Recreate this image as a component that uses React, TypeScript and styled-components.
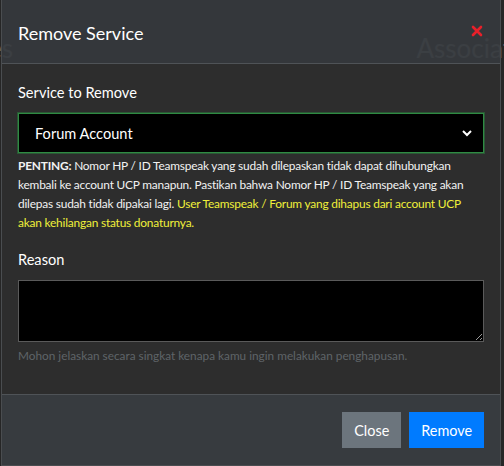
import React from 'react';
import styled, { createGlobalStyle } from 'styled-components';

const GlobalStyle = createGlobalStyle`
  html, body {
    margin: 0;
    padding: 0;
    background: #1c1c1c;
    font-family: Lato, 'Open Sans', sans-serif;
  }
`;

const Page = styled.div`
  position: relative;
  width: 504px;
  height: 466px;
  overflow: hidden;
  background: #262626;
`;

const Backdrop = styled.div`
  display: flex;
  justify-content: space-between;
  padding: 32px 0 0 0;
  color: #6a6d70;
  font-size: 26px;
  line-height: 32px;
`;

const BackText = styled.span<{ $shift: number }>`
  margin-left: ${(p) => Math.min(p.$shift, 0)}px;
  margin-right: ${(p) => Math.min(-p.$shift, 0)}px;
  white-space: nowrap;
`;

const Modal = styled.div`
  position: absolute;
  top: 0;
  left: 1px;
  width: 500px;
  height: 466px;
  display: flex;
  flex-direction: column;
  border: 1px solid #4a4d50;
  border-top: none;
  box-sizing: border-box;
  color: #fff;
`;

const Header = styled.div`
  display: flex;
  justify-content: space-between;
  align-items: center;
  height: 64px;
  padding: 0 17px 0 16px;
  box-sizing: border-box;
  background: rgba(54, 58, 62, 0.9);
  border-bottom: 1px solid #4f5357;
`;

const Title = styled.h5`
  margin: 2px 0 0;
  font-size: 18px;
  font-weight: 400;
`;

const CloseX = styled.button`
  border: none;
  background: none;
  padding: 0;
  margin-top: -2px;
  display: flex;
  cursor: pointer;
`;

const Body = styled.div`
  flex: 1;
  padding: 17px 16px 0;
  background: #2d2d2d;
  border-bottom: 1px solid #4f5357;
`;

const Group = styled.div`
  margin-bottom: 16px;
`;

const Label = styled.label`
  display: block;
  font-size: 14.6px;
  line-height: 24px;
  margin-bottom: 8px;
`;

const SelectWrap = styled.div`
  position: relative;
`;

const Select = styled.select`
  width: 100%;
  height: 40px;
  appearance: none;
  background: #000;
  color: #fff;
  border: 1px solid #2f8a43;
  box-shadow: 0 0 0 1px rgba(40, 167, 69, 0.35);
  border-radius: 0;
  padding: 0 16px;
  font-family: inherit;
  font-size: 14.6px;
  outline: none;
`;

const Chevron = styled.svg`
  position: absolute;
  right: 11px;
  top: 15px;
  pointer-events: none;
`;

const Small = styled.small`
  display: block;
  margin-top: 3px;
  font-size: 11.9px;
  letter-spacing: -0.2px;
  line-height: 19px;
  color: #f2f2f2;
`;

const Warn = styled.span`
  color: #f0f03a;
`;

const TextArea = styled.textarea`
  display: block;
  width: 100%;
  height: 62px;
  box-sizing: border-box;
  background: #000;
  color: #fff;
  border: 1px solid #5a5a5a;
  border-radius: 0;
  outline: none;
  font-family: inherit;
`;

const Hint = styled.small`
  display: block;
  margin-top: 4px;
  font-size: 11.8px;
  line-height: 19px;
  color: #5f6468;
`;

const Footer = styled.div`
  display: flex;
  justify-content: flex-end;
  align-items: center;
  gap: 8px;
  height: 70px;
  padding: 0 16px;
  background: #373b3f;
`;

const Button = styled.button<{ $primary?: boolean }>`
  height: 36px;
  padding: 0 12px;
  border: none;
  border-radius: 0;
  color: #fff;
  font-family: inherit;
  font-size: 14.4px;
  background: ${(p) => (p.$primary ? '#007bff' : '#6c757d')};
`;

const App: React.FC = () => (
  <Page>
    <GlobalStyle />
    <Backdrop>
      <BackText $shift={-12}>es</BackText>
      <BackText $shift={8}>Associat</BackText>
    </Backdrop>

    <Modal>
      <Header>
        <Title>Remove Service</Title>
        <CloseX aria-label='Close'>
          <svg width='12' height='12' viewBox='0 0 12 12'>
            <path d='M2 2L10 10M10 2L2 10' stroke='#e8202a' strokeWidth='2.6' strokeLinecap='round' />
          </svg>
        </CloseX>
      </Header>

      <Body>
        <Group>
          <Label>Service to Remove</Label>
          <SelectWrap>
            <Select defaultValue='forum'>
              <option value='forum'>Forum Account</option>
            </Select>
            <Chevron width='12' height='10' viewBox='0 0 12 10'>
              <path d='M2 3L6 7L10 3' fill='none' stroke='#fff' strokeWidth='2' />
            </Chevron>
          </SelectWrap>
          <Small>
            <b>PENTING:</b> Nomor HP / ID Teamspeak yang sudah dilepaskan tidak dapat dihubungkan
            kembali ke account UCP manapun. Pastikan bahwa Nomor HP / ID Teamspeak yang akan
            dilepas sudah tidak dipakai lagi.{' '}
            <Warn>User Teamspeak / Forum yang dihapus dari account UCP akan kehilangan status donaturnya.</Warn>
          </Small>
        </Group>

        <Group>
          <Label>Reason</Label>
          <TextArea />
          <Hint>Mohon jelaskan secara singkat kenapa kamu ingin melakukan penghapusan.</Hint>
        </Group>
      </Body>

      <Footer>
        <Button>Close</Button>
        <Button $primary>Remove</Button>
      </Footer>
    </Modal>
  </Page>
);

export default App;
